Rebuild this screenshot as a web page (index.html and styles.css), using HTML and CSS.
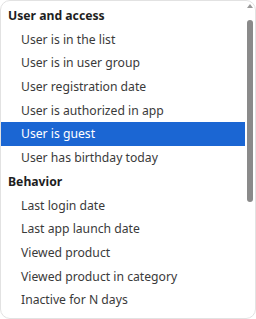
FILE: index.html
```html
<!DOCTYPE html>
<html lang="en">
<head>
    <meta charset="UTF-8">
    <title>Conditions</title>
    <link rel="stylesheet" href="styles.css">
</head>
<body>
    <!-- Dropdown with condition groups -->
    <div class="dropdown">
        <ul class="options">
            <li class="group">User and access</li>
            <li class="item">User is in the list</li>
            <li class="item">User is in user group</li>
            <li class="item">User registration date</li>
            <li class="item">User is authorized in app</li>
            <li class="item selected">User is guest</li>
            <li class="item">User has birthday today</li>
            <li class="group">Behavior</li>
            <li class="item">Last login date</li>
            <li class="item">Last app launch date</li>
            <li class="item">Viewed product</li>
            <li class="item">Viewed product in category</li>
            <li class="item">Inactive for N days</li>
        </ul>

        <!-- Fake scrollbar -->
        <div class="scrollbar">
            <div class="arrow"></div>
            <div class="thumb"></div>
        </div>
    </div>
</body>
</html>
```

FILE: styles.css
```css
/* Page */
body {
    margin: 0;
    background-color: #fff;
    font-family: "Noto Sans", "Open Sans", sans-serif;
}

/* Dropdown panel */
.dropdown {
    box-sizing: border-box;
    width: 256px;
    height: 319px;
    border: 1px solid #e2e2e2;
    border-radius: 10px;
    background-color: #fff;
    overflow: hidden;
    display: flex;
}

.options {
    list-style: none;
    margin: 0;
    padding: 3px 0 0 0;
    flex: 1;
}

.options li {
    height: 23.7px;
    line-height: 23.7px;
    font-size: 12.2px;
    white-space: nowrap;
}

.group {
    padding-left: 7px;
    font-weight: bold;
    color: #1e1e1e;
}

.item {
    padding-left: 20px;
    color: #3a3a3a;
}

.item.selected {
    background-color: #1b66d3;
    color: #fff;
}

/* Scrollbar */
.scrollbar {
    width: 10px;
    display: flex;
    flex-direction: column;
    align-items: center;
    padding-top: 3px;
}

.arrow {
    width: 0;
    height: 0;
    border-left: 3px solid transparent;
    border-right: 3px solid transparent;
    border-bottom: 4px solid #9a9a9a;
}

.thumb {
    margin-top: 12px;
    width: 6px;
    height: 182px;
    border-radius: 3px;
    background-color: #8a8a8a;
}
```
